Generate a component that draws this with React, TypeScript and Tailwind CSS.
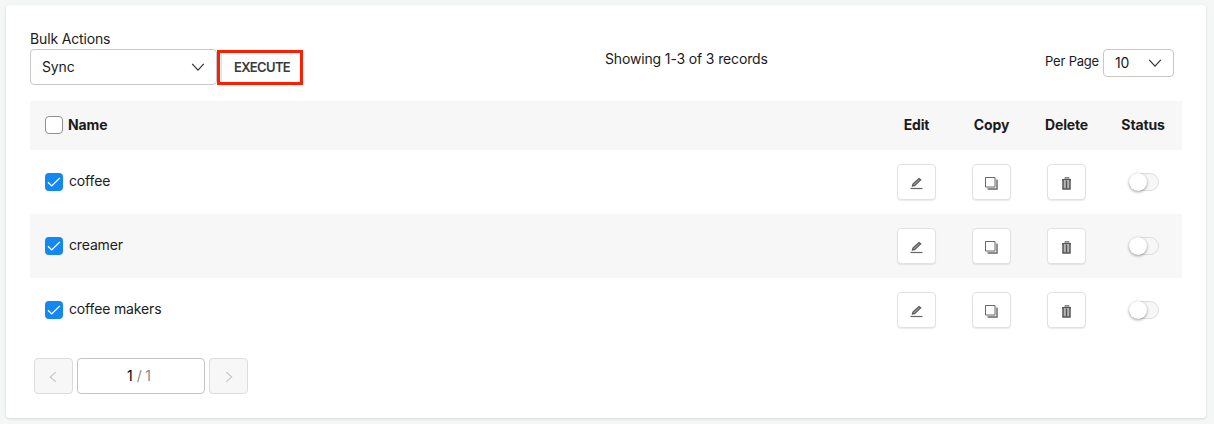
import { useState } from 'react'

interface Row {
  id: number
  name: string
}

const rows: Row[] = [
  { id: 1, name: 'coffee' },
  { id: 2, name: 'creamer' },
  { id: 3, name: 'coffee makers' },
]

const gridCols = 'grid grid-cols-[1fr_75px_75px_75px_78px]'

function Chevron({ className }: { className?: string }) {
  return (
    <svg width="14" height="14" viewBox="0 0 14 14" fill="none" stroke="currentColor" strokeWidth="1.2" className={className}>
      <path d="M1.2 3.8 7 10.2l5.8-6.4" />
    </svg>
  )
}

function EditIcon() {
  return (
    <svg width="13" height="13" viewBox="0 0 13 13" fill="none">
      <path d="M.5 11.5h12" stroke="#666" strokeWidth="1.2" />
      <path d="M2.4 9 3 7.1 9 1.5l1.7 1.4-6.1 5.7z" fill="#a5a5a5" stroke="#555" strokeWidth="1.2" />
    </svg>
  )
}

function CopyIcon() {
  return (
    <svg width="13" height="13" viewBox="0 0 13 13" fill="none" stroke="#666">
      <path d="M.5.5h9.5v9.5H.5z" />
      <path d="M12 2.5V12H2.5" strokeWidth="1.4" />
    </svg>
  )
}

function TrashIcon() {
  return (
    <svg width="9" height="13" viewBox="0 0 9 13" fill="none" stroke="#555">
      <path d="M3 2.5v-2h4v2" fill="#aaa" stroke="#888" />
      <path d="M0 2.8h9" strokeWidth="1.6" />
      <path d="M1 3v9h7V3" fill="#b4b4b4" strokeWidth="1.5" />
      <path d="M4.5 3.5v8" strokeWidth="1.4" />
    </svg>
  )
}

function Checkbox({ checked, onChange, label }: { checked: boolean; onChange: () => void; label: string }) {
  return (
    <button
      role="checkbox"
      aria-checked={checked}
      aria-label={label}
      onClick={onChange}
      className={`flex size-[18px] shrink-0 items-center justify-center rounded ${
        checked ? 'bg-[#1388f2]' : 'border border-[#8f8f8f] bg-white'
      }`}
    >
      {checked && (
        <svg width="14" height="12" viewBox="0 0 14 12" fill="none" stroke="white" strokeWidth="1.3">
          <path d="m1 6.3 3.7 3.6L12.8 2" />
        </svg>
      )}
    </button>
  )
}

function IconButton({ label, children }: { label: string; children: React.ReactNode }) {
  return (
    <button
      aria-label={label}
      className="flex h-9 w-[39px] items-center justify-center rounded border border-[#e2e2e2] bg-white pt-[3px] shadow-[0_1px_1px_rgba(0,0,0,0.08)]"
    >
      {children}
    </button>
  )
}

function Toggle() {
  const [on, setOn] = useState(false)
  return (
    <button
      role="switch"
      aria-checked={on}
      aria-label="Status"
      onClick={() => setOn(!on)}
      className={`flex h-[18px] w-[30px] items-center rounded-full border border-[#dedede] ${on ? 'justify-end bg-[#1388f2]' : 'bg-[#f7f7f7]'}`}
    >
      <span className="-ml-px size-[18px] shrink-0 rounded-full bg-white shadow-[0_1px_3px_rgba(0,0,0,0.4)]" />
    </button>
  )
}

export default function App() {
  const [selected, setSelected] = useState<number[]>([1, 2, 3])
  const [allChecked, setAllChecked] = useState(false)

  function toggleRow(id: number) {
    setSelected(prev => (prev.includes(id) ? prev.filter(x => x !== id) : [...prev, id]))
  }

  function toggleAll() {
    setSelected(allChecked ? [] : rows.map(r => r.id))
    setAllChecked(!allChecked)
  }

  return (
    <div className="h-[424px] bg-[#f5f7f7] px-[6px] pt-[5px] font-['Inter',sans-serif] text-sm tracking-[-0.15px] text-[#1b1b1b]">
      <div className="mr-[2px] h-[413px] rounded bg-white px-6 pt-6 shadow-[0_1px_3px_rgba(0,0,0,0.12)]">
        <div className="grid h-[72px] grid-cols-[575px_auto_1fr] items-start">
          <div>
            <div className="h-5 leading-5">Bulk Actions</div>
            <div className="flex items-start">
              <button className="flex h-9 w-[187px] items-center justify-between rounded border border-[#c8c8c8] bg-white px-[11px]">
                Sync
                <Chevron className="text-[#333]" />
              </button>
              <div className="mt-px flex h-[35px] w-[86px] border-[3px] border-[#ff1e00] bg-white pl-px">
                <button className="flex-1 border-l border-[#e2e2e2] pl-0.5 text-[13px] font-semibold tracking-[-0.65px] text-[#3a3a3a]">
                  EXECUTE
                </button>
              </div>
            </div>
          </div>
          <div className="mt-5 leading-5">Showing 1-3 of 3 records</div>
          <div className="mt-5 mr-2 flex items-start justify-end gap-1">
            <span className="mt-0.5 text-[13px] leading-5 tracking-[-0.2px]">Per Page</span>
            <button className="flex h-7 w-[71px] items-center justify-between rounded border border-[#c8c8c8] bg-white px-[11px]">
              10
              <Chevron className="text-[#333]" />
            </button>
          </div>
        </div>

        <div className={`${gridCols} h-[49px] items-center bg-[#f7f7f7] pb-px font-bold`}>
          <div className="flex items-center gap-[5px] pl-[15px]">
            <Checkbox checked={allChecked} onChange={toggleAll} label="Select all" />
            Name
          </div>
          <div className="text-center">Edit</div>
          <div className="text-center">Copy</div>
          <div className="text-center">Delete</div>
          <div className="text-center">Status</div>
        </div>

        <div>
          {rows.map(row => (
            <div key={row.id} className={`${gridCols} h-16 items-center bg-white even:bg-[#f7f7f7]`}>
              <div className="flex items-center gap-1.5 pl-[15px]">
                <Checkbox checked={selected.includes(row.id)} onChange={() => toggleRow(row.id)} label={row.name} />
                <span className="-mt-0.5">{row.name}</span>
              </div>
              <div className="flex justify-center">
                <IconButton label="Edit"><EditIcon /></IconButton>
              </div>
              <div className="flex justify-center">
                <IconButton label="Copy"><CopyIcon /></IconButton>
              </div>
              <div className="flex justify-center">
                <IconButton label="Delete"><TrashIcon /></IconButton>
              </div>
              <div className="flex justify-center pl-0.5">
                <Toggle />
              </div>
            </div>
          ))}
        </div>

        <div className="mt-4 ml-1 flex gap-1">
          <button className="flex h-9 w-[39px] items-center justify-center rounded border border-[#dcdcdc] bg-[#f7f7f7] pt-0.5 pr-px text-[#c4c4c4]">
            <Chevron className="size-3 rotate-90" />
          </button>
          <div className="flex h-9 w-32 items-center justify-center gap-1 rounded border border-[#c4c4c4] bg-white pr-1">
            <span className="text-black">1</span>
            <span className="text-[#888]">/ 1</span>
          </div>
          <button className="flex h-9 w-[39px] items-center justify-center rounded border border-[#dcdcdc] bg-[#f7f7f7] pt-0.5 text-[#c4c4c4]">
            <Chevron className="size-3 -rotate-90" />
          </button>
        </div>
      </div>
    </div>
  )
}
